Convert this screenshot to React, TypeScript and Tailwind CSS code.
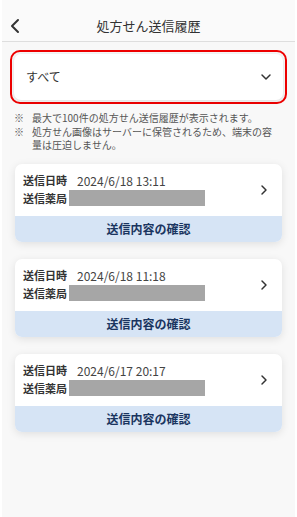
import { ChevronLeft, ChevronDown, ChevronRight } from "lucide-react";

const history = [
  { date: "2024/6/18 13:11" },
  { date: "2024/6/18 11:18" },
  { date: "2024/6/17 20:17" },
];

function HistoryCard({ date }: { date: string }) {
  return (
    <div className="rounded-[7px] bg-white overflow-hidden shadow-[0_2px_8px_rgba(0,0,0,0.10)]">
      <div className="flex items-center h-[52px] pl-[8px] pr-[10px]">
        <div className="flex-1 flex flex-col gap-[1px]">
          <div className="flex items-center h-[16px]">
            <span className="w-[54px] text-[11px] font-semibold text-[#333]">送信日時</span>
            <span className="text-[12px] text-[#444]">{date}</span>
          </div>
          <div className="flex items-center h-[17px]">
            <span className="w-[46px] text-[11px] font-semibold text-[#333]">送信薬局</span>
            <div className="w-[136px] h-[16px] bg-[#a6a6a6]" />
          </div>
        </div>
        <ChevronRight className="w-[16px] h-[16px] text-[#333]" strokeWidth={2.2} />
      </div>
      <div className="h-[26px] bg-[#d6e4f5] flex items-center justify-center">
        <span className="text-[12px] font-bold text-[#1a3560]">送信内容の確認</span>
      </div>
    </div>
  );
}

export default function App() {
  return (
    <div
      className="w-[297px] h-[517px] bg-white px-[2px]"
      style={{ fontFamily: '"Noto Sans CJK JP", "Noto Sans", sans-serif' }}
    >
      <div className="h-full bg-[#f8f8f8] flex flex-col">
        {/* Header */}
        <div className="relative h-[42px] bg-[#fafafa] border-b border-[#dedede] flex items-center justify-center pt-[10px]">
          <ChevronLeft className="absolute left-[1px] top-[14px] w-[24px] h-[24px] text-[#333]" strokeWidth={2} />
          <span className="text-[13px] text-[#333]">処方せん送信履歴</span>
        </div>

        {/* Filter select */}
        <div className="mx-[8px] mt-[8px] p-[2px] rounded-[10px] border-[2px] border-[#ee0000]">
          <div className="h-[46px] rounded-[7px] bg-white shadow-[0_1px_4px_rgba(0,0,0,0.12)] flex items-center justify-between pl-[12px] pr-[9px]">
            <span className="text-[12px] text-[#333]">すべて</span>
            <ChevronDown className="w-[16px] h-[16px] text-[#333]" strokeWidth={2.2} />
          </div>
        </div>

        {/* Notes */}
        <div className="mt-[7px] pl-[12px] pr-[14px] text-[10px] leading-[13.5px] text-[#555]">
          <div className="flex">
            <span className="w-[18px] shrink-0">※</span>
            <span>最大で100件の処方せん送信履歴が表示されます。</span>
          </div>
          <div className="flex">
            <span className="w-[18px] shrink-0">※</span>
            <span>処方せん画像はサーバーに保管されるため、端末の容量は圧迫しません。</span>
          </div>
        </div>

        {/* History list */}
        <div className="mt-[12px] px-[13px] flex flex-col gap-[17px]">
          {history.map((h) => (
            <HistoryCard key={h.date} date={h.date} />
          ))}
        </div>
      </div>
    </div>
  );
}
